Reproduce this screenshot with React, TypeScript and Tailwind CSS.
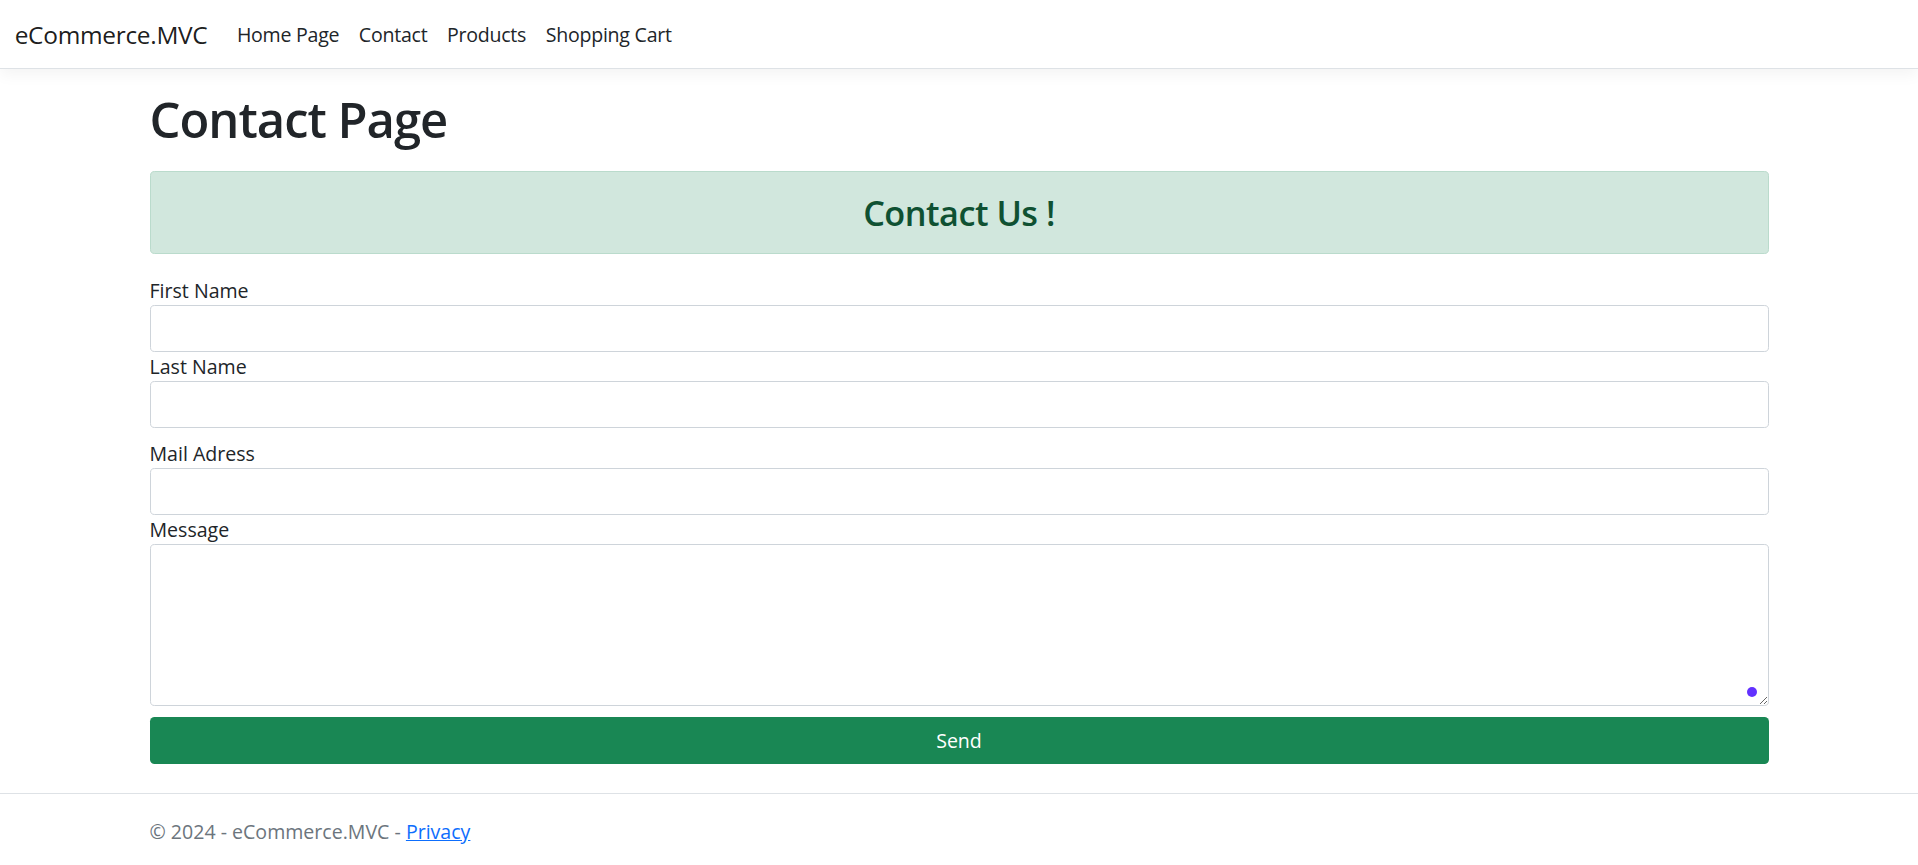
import React from "react";

const navLinks = ["Home Page", "Contact", "Products", "Shopping Cart"];

const fields = [
  { id: "firstName", label: "First Name", gap: false },
  { id: "lastName", label: "Last Name", gap: false },
  { id: "mail", label: "Mail Adress", gap: true },
];

export default function App() {
  return (
    <div
      className="flex min-h-[865px] flex-col bg-white text-[19.57px] leading-[1.5] text-[#212529]"
      style={{ fontFamily: '"Open Sans", "Noto Sans", sans-serif' }}
    >
      {/* Navbar */}
      <header className="relative z-10 flex h-[69px] items-center border-b border-[#dee2e6] bg-white px-[14.7px] pt-[2px] shadow-[0_5px_15px_rgba(0,0,0,0.05)]">
        <a href="#" className="mr-[19.6px] text-[24.46px] leading-[1.5] tracking-[-0.3px] text-[rgba(0,0,0,0.9)]">
          eCommerce.MVC
        </a>
        <nav className="flex items-center">
          {navLinks.map((link) => (
            <a key={link} href="#" className="px-[9.8px] text-[19.57px] tracking-[-0.25px] text-[#212529]">
              {link}
            </a>
          ))}
        </nav>
      </header>

      {/* Main content */}
      <main className="mx-auto w-[1619px] flex-1 pt-[21px]">
        <h1 className="mb-[22px] text-[48.93px] font-semibold leading-[1.2] tracking-[-1px] text-[#212529]">
          Contact Page
        </h1>

        <div className="mb-[22px] flex h-[83px] items-center justify-center rounded-[4.6px] border border-[#badbcc] bg-[#d1e7dd]">
          <h3 className="text-[34.25px] font-semibold leading-[1.2] tracking-[-0.5px] text-[#0f5132]">Contact Us !</h3>
        </div>

        <form className="flex flex-col" onSubmit={(e) => e.preventDefault()}>
          {fields.map((f) => (
            <div key={f.id} className={`flex flex-col ${f.gap ? "mt-[11.5px]" : ""}`}>
              <label htmlFor={f.id} className="h-[29.4px] leading-[29.4px]">
                {f.label}
              </label>
              <input
                id={f.id}
                type="text"
                className="h-[46.5px] w-full rounded-[4.6px] border border-[#ced4da] bg-white px-[14.7px] outline-none"
              />
            </div>
          ))}

          <div className="flex flex-col">
            <label htmlFor="message" className="h-[29.4px] leading-[29.4px]">
              Message
            </label>
            <div className="relative">
              <textarea
                id="message"
                className="block h-[162px] w-full rounded-[4.6px] border border-[#ced4da] bg-white px-[14.7px] py-[7px] outline-none"
              />
              {/* extension badge dot */}
              <span className="absolute bottom-[9px] right-[12px] h-[10px] w-[10px] rounded-full bg-[#6231ff]" />
            </div>
          </div>

          <button
            type="submit"
            className="mt-[11px] h-[47px] w-full rounded-[4.6px] bg-[#198754] text-[19.57px] text-white"
          >
            Send
          </button>
        </form>
      </main>

      {/* Footer */}
      <footer className="mt-[26px] h-[72px] border-t border-[#dee2e6] leading-[76px] text-[#6c757d]">
        <div className="mx-auto w-[1619px] whitespace-nowrap">
          © 2024 - eCommerce.MVC -{" "}
          <a href="#" className="text-[#0d6efd] underline">
            Privacy
          </a>
        </div>
      </footer>
    </div>
  );
}
